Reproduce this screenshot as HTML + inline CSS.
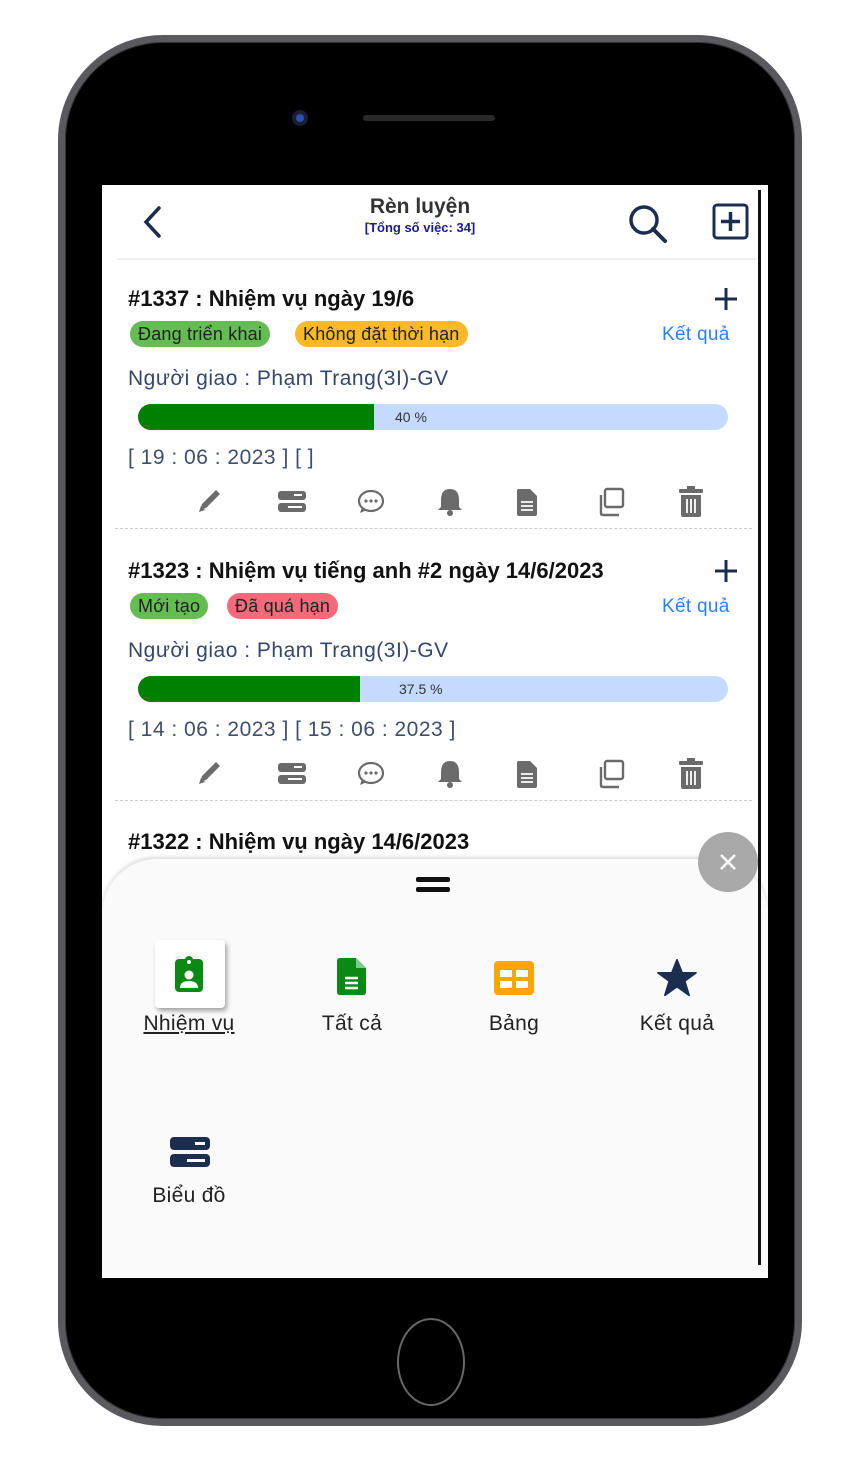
<!DOCTYPE html>
<html><head><meta charset="utf-8"><style>
*{margin:0;padding:0;box-sizing:border-box}
body{width:843px;height:1475px;background:#fff;position:relative;overflow:hidden;font-family:"Liberation Sans",sans-serif}
.abs{position:absolute}
.phone{left:58px;top:35px;width:744px;height:1391px;border-radius:105px;background:#000;border:7px solid #5a5a5e;box-shadow:0 0 0 1px #333 inset}
.screen{left:102px;top:185px;width:666px;height:1093px;background:#fff;overflow:hidden}
.t{position:absolute;white-space:nowrap}
.title{font-weight:bold;font-size:22px;color:#111;letter-spacing:0px}
.tag{position:absolute;height:26px;border-radius:13px;font-size:18px;line-height:26px;padding:0 8px;color:#222;letter-spacing:0.2px}
.kq{font-size:19px;color:#2b80f5;letter-spacing:0.3px}
.ng{font-size:21px;color:#34486a;letter-spacing:0.5px}
.bar{position:absolute;left:36px;width:590px;height:26px;border-radius:13px;background:#c4daff;overflow:hidden}
.bar div{height:100%;background:#008000}
.bar span{position:absolute;top:0;left:0;text-align:center;font-size:14px;line-height:26px;color:#333}
.dt{font-size:21px;color:#3d4f6b;letter-spacing:0.5px}
.dash{position:absolute;left:13px;width:637px;border-top:1px dashed #ccc}
.lab{position:absolute;font-size:21px;color:#222;text-align:center;width:140px;letter-spacing:0.3px}
</style></head><body>
<div class="abs phone"></div>
<div class="abs" style="left:292px;top:110px;width:16px;height:16px;border-radius:50%;background:#1a1f33"></div>
<div class="abs" style="left:296px;top:114px;width:8px;height:8px;border-radius:50%;background:#2b4fb0"></div>
<div class="abs" style="left:363px;top:115px;width:132px;height:6px;border-radius:3px;background:#2a2a2a"></div>
<div class="abs" style="left:397px;top:1318px;width:68px;height:88px;border-radius:50%;border:2px solid #666"></div>

<div class="abs screen">
 <svg class="abs" style="left:38px;top:20px" width="24" height="34" viewBox="0 0 24 34"><path d="M19 3 L6 17 L19 31" fill="none" stroke="#1c2e50" stroke-width="3.5" stroke-linecap="round"/></svg>
 <div class="t" style="left:0;width:636px;text-align:center;top:10px;font-size:21px;font-weight:bold;color:#333">Rèn luyện</div>
 <div class="t" style="left:0;width:636px;text-align:center;top:35px;font-size:13px;font-weight:bold;color:#1a1a9a">[Tổng số việc: 34]</div>
 <svg class="abs" style="left:525px;top:18px" width="42" height="42" viewBox="0 0 42 42"><circle cx="17" cy="17" r="13" fill="none" stroke="#1c2e50" stroke-width="3.5"/><path d="M26 26 L38 38" stroke="#1c2e50" stroke-width="4" stroke-linecap="round"/></svg>
 <svg class="abs" style="left:610px;top:18px" width="38" height="38" viewBox="0 0 38 38"><rect x="2" y="2" width="33" height="33" rx="3" fill="none" stroke="#1c2e50" stroke-width="3"/><path d="M18.5 9 V28 M9 18.5 H28" stroke="#1c2e50" stroke-width="3.5"/></svg>
 <div class="abs" style="left:15px;top:73px;width:640px;height:2px;background:#f0f0f0"></div>

 <div class="t title" style="left:26px;top:101px">#1337 : Nhiệm vụ ngày 19/6</div>
 <svg class="abs" style="left:612px;top:102px" width="24" height="24"><path d="M12 1V23M1 12H23" stroke="#1c2e50" stroke-width="3"/></svg>
 <div class="tag" style="left:28px;top:136px;background:#64bd52">Đang triển khai</div>
 <div class="tag" style="left:193px;top:136px;background:#fbb92a">Không đặt thời hạn</div>
 <div class="t kq" style="left:560px;top:139px">Kết quả</div>
 <div class="t ng" style="left:26px;top:182px">Người giao : Phạm Trang(3I)-GV</div>
 <div class="bar" style="top:219px"><div style="width:236px"></div><span style="left:257px">40 %</span></div>
 <div class="t dt" style="left:26px;top:261px">[ 19 : 06 : 2023 ] [ ]</div>
 <div class="dash" style="top:343px"></div>

 <div class="t title" style="left:26px;top:373px">#1323 : Nhiệm vụ tiếng anh #2 ngày 14/6/2023</div>
 <svg class="abs" style="left:612px;top:374px" width="24" height="24"><path d="M12 1V23M1 12H23" stroke="#1c2e50" stroke-width="3"/></svg>
 <div class="tag" style="left:28px;top:408px;background:#64bd52">Mới tạo</div>
 <div class="tag" style="left:125px;top:408px;background:#f46a7a">Đã quá hạn</div>
 <div class="t kq" style="left:560px;top:411px">Kết quả</div>
 <div class="t ng" style="left:26px;top:454px">Người giao : Phạm Trang(3I)-GV</div>
 <div class="bar" style="top:491px"><div style="width:222px"></div><span style="left:261px">37.5 %</span></div>
 <div class="t dt" style="left:26px;top:533px">[ 14 : 06 : 2023 ] [ 15 : 06 : 2023 ]</div>
 <div class="dash" style="top:615px"></div>

 <div class="t title" style="left:26px;top:644px">#1322 : Nhiệm vụ ngày 14/6/2023</div>

 <div class="abs" style="left:0;top:674px;width:666px;height:430px;background:#fafafa;border-top-left-radius:55px;border-top-right-radius:55px;box-shadow:0 -2px 4px rgba(0,0,0,.15)"></div>
 <div class="abs" style="left:314px;top:692px;width:34px;height:5px;border-radius:2px;background:#111"></div>
 <div class="abs" style="left:314px;top:702px;width:34px;height:5px;border-radius:2px;background:#111"></div>
 <div class="abs" style="left:596px;top:647px;width:60px;height:60px;border-radius:50%;background:#a9a9a9"></div>
 <svg class="abs" style="left:616px;top:667px" width="20" height="20"><path d="M3 3L17 17M17 3L3 17" stroke="#fff" stroke-width="2.5"/></svg>

 <div class="abs" style="left:53px;top:755px;width:70px;height:68px;background:#fff;border-radius:4px;box-shadow:2px 3px 5px rgba(0,0,0,.35)"></div>
 <svg class="abs" style="left:72px;top:770px" width="30" height="38" viewBox="0 0 30 38"><rect x="1" y="4" width="28" height="33" rx="4" fill="#0a8a14"/><circle cx="15" cy="5" r="4" fill="#0a8a14"/><circle cx="15" cy="7" r="2" fill="#fff"/><circle cx="15" cy="20" r="4.5" fill="#fff"/><path d="M6 33 Q6 26 15 26 Q24 26 24 33Z" fill="#fff"/></svg>
 <svg class="abs" style="left:235px;top:773px" width="30" height="38" viewBox="0 0 30 38"><path d="M3 0H19L29 10V34Q29 37 26 37H3Q0 37 0 34V3Q0 0 3 0Z" fill="#0a8a14"/><path d="M19 0V10H29" fill="#7fc98a"/><path d="M8 20H21M8 25H21M8 30H21" stroke="#fff" stroke-width="2.5"/></svg>
 <svg class="abs" style="left:392px;top:776px" width="40" height="34" viewBox="0 0 40 34"><rect x="0" y="0" width="40" height="34" rx="4" fill="#ffa500"/><rect x="6" y="9" width="12" height="7" fill="#fff"/><rect x="22" y="9" width="12" height="7" fill="#fff"/><rect x="6" y="20" width="12" height="7" fill="#fff"/><rect x="22" y="20" width="12" height="7" fill="#fff"/></svg>
 <svg class="abs" style="left:554px;top:774px" width="42" height="38" viewBox="0 0 24 22"><path d="M12 0.5L15 8H23L16.5 12.8L19 21L12 16L5 21L7.5 12.8L1 8H9Z" fill="#1c2e50" stroke="#1c2e50" stroke-linejoin="round"/></svg>
 <div class="lab" style="left:17px;top:827px;text-decoration:underline">Nhiệm vụ</div>
 <div class="lab" style="left:180px;top:827px">Tất cả</div>
 <div class="lab" style="left:342px;top:827px">Bảng</div>
 <div class="lab" style="left:505px;top:827px">Kết quả</div>
 <svg class="abs" style="left:67px;top:951px" width="42" height="32" viewBox="0 0 42 32"><rect x="1" y="1" width="40" height="13" rx="4" fill="#1c2e50"/><rect x="1" y="18" width="40" height="13" rx="4" fill="#1c2e50"/><rect x="26" y="6" width="10" height="3" fill="#fff"/><rect x="18" y="23" width="18" height="3" fill="#fff"/></svg>
 <div class="lab" style="left:17px;top:999px">Biểu đồ</div>

 <div class="abs" style="left:656px;top:5px;width:3px;height:1075px;background:#111"></div>
</div>

<svg width="0" height="0" style="position:absolute">
<defs>
<g id="icons" fill="#6b6b6b">
 <path d="M10 25 L12 19 L26 5 L30 9 L16 23 Z M9 27 L11 21 L15 25Z"/>
 <rect x="88" y="6" width="28" height="9" rx="3"/><rect x="88" y="18" width="28" height="9" rx="3"/>
 <rect x="104" y="9" width="8" height="2" fill="#fff"/><rect x="98" y="21" width="14" height="2" fill="#fff"/>
 <ellipse cx="181" cy="16" rx="12" ry="10" fill="none" stroke="#6b6b6b" stroke-width="2.2"/><path d="M172 22 L170 28 L177 25Z"/>
 <circle cx="176" cy="16" r="1.6"/><circle cx="181" cy="16" r="1.6"/><circle cx="186" cy="16" r="1.6"/>
 <path d="M260 4 Q269 4 269 15 V22 L272 25 H248 L251 22 V15 Q251 4 260 4Z"/><circle cx="260" cy="28" r="3"/>
 <path d="M329 4 H340 L347 11 V29 Q347 31 345 31 H329 Q327 31 327 29 V6 Q327 4 329 4Z"/>
 <path d="M331 17H343M331 21H343M331 25H343" stroke="#fff" stroke-width="1.8"/>
 <rect x="415" y="4" width="18" height="18" rx="2" fill="none" stroke="#6b6b6b" stroke-width="2.4"/>
 <path d="M411 10 V28 Q411 30 413 30 H429" fill="none" stroke="#6b6b6b" stroke-width="2.4"/>
 <rect x="489" y="4" width="24" height="4" rx="1"/><rect x="497" y="1" width="8" height="3"/>
 <path d="M491 10 H511 V30 Q511 32 509 32 H493 Q491 32 491 30Z"/>
 <path d="M497 14V28M501 14V28M505 14V28" stroke="#fff" stroke-width="1.8"/>
</g></defs></svg>
<svg class="abs" style="left:190px;top:485px" width="530" height="36"><use href="#icons"/></svg>
<svg class="abs" style="left:190px;top:757px" width="530" height="36"><use href="#icons"/></svg>
</body></html>
